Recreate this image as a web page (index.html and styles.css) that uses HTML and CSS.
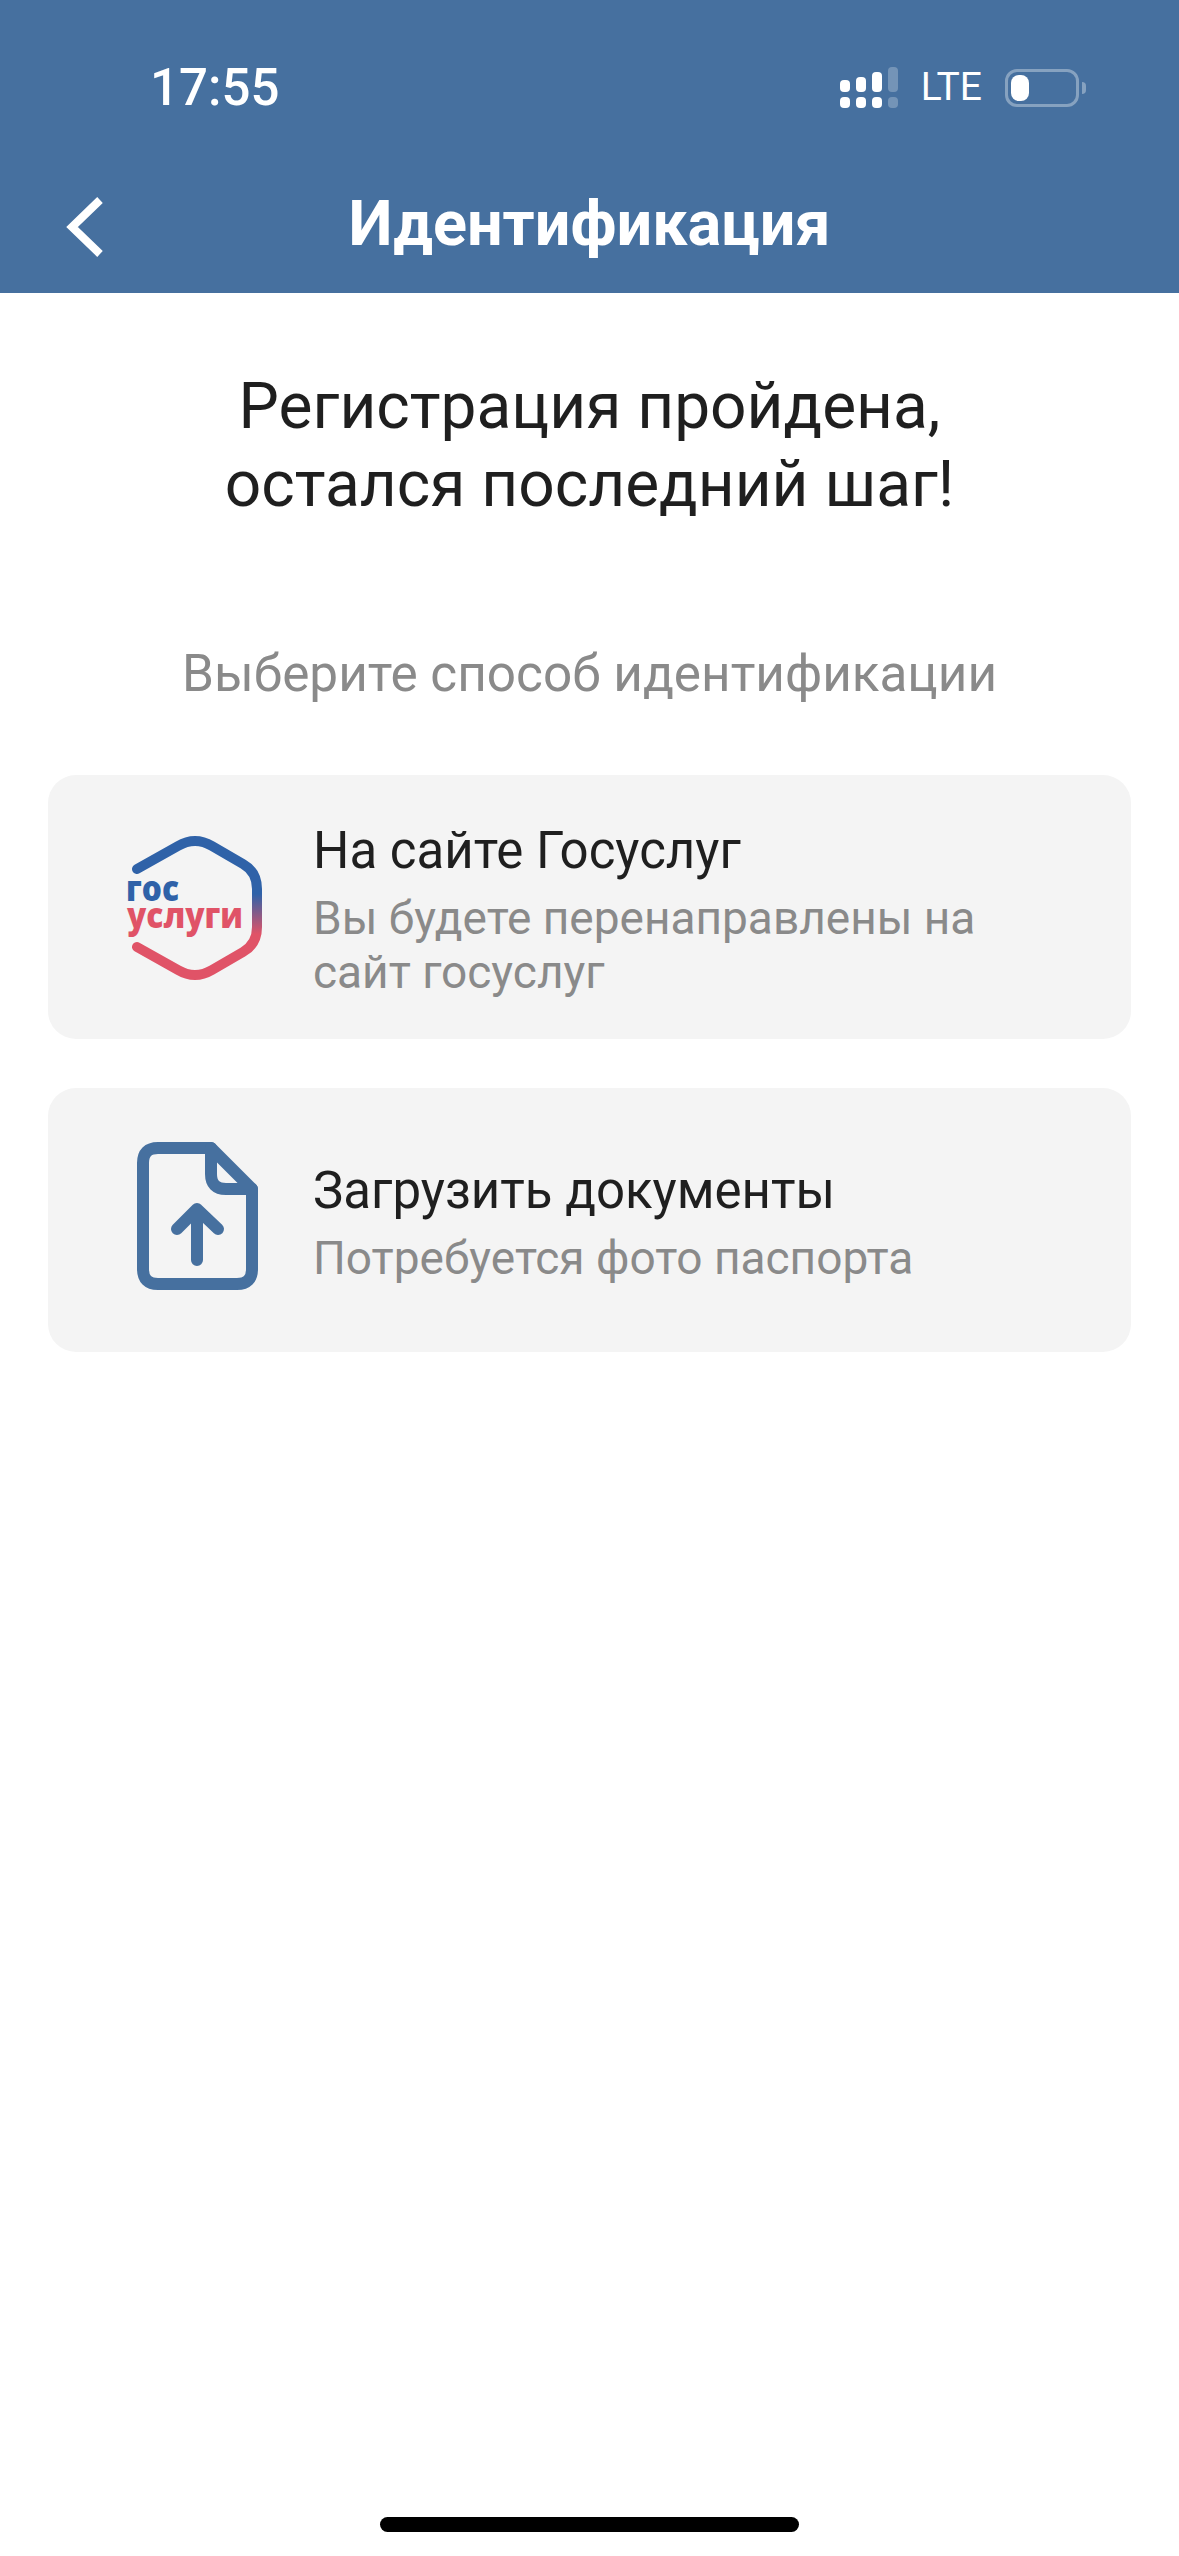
FILE: index.html
```html
<!DOCTYPE html>
<html lang="ru">
<head>
  <meta charset="UTF-8">
  <title>Идентификация</title>
  <link rel="stylesheet" href="styles.css">
</head>
<body>

<div class="page">
  <div class="top-bar">
    <div class="status-bar">
      <div class="status-time">17:55</div>
      <div class="status-right">
        <svg class="signal" width="58" height="41" viewBox="0 0 58 41">
          <g fill="#fff">
            <rect x="0" y="13" width="10" height="12" rx="4"/>
            <rect x="16" y="10" width="10" height="15" rx="4"/>
            <rect x="32" y="5" width="10" height="20" rx="4"/>
            <rect x="0" y="30" width="10" height="11" rx="4"/>
            <rect x="16" y="30" width="10" height="11" rx="4"/>
            <rect x="32" y="30" width="10" height="11" rx="4"/>
          </g>
          <g fill="#fff" opacity="0.25">
            <rect x="48" y="0" width="10" height="25" rx="4"/>
            <rect x="48" y="30" width="10" height="11" rx="4"/>
          </g>
        </svg>
        <div class="status-net">LTE</div>
        <div class="battery">
          <div class="battery-body"><div class="battery-fill"></div></div>
          <div class="battery-tip"></div>
        </div>
      </div>
    </div>
    <div class="nav-bar">
      <svg class="back-icon" width="40" height="60" viewBox="0 0 40 60">
        <path d="M35 3 L7 30 L35 57" fill="none" stroke="#fff" stroke-width="8"/>
      </svg>
      <div class="nav-title">Идентификация</div>
    </div>
  </div>

  <div class="content">
    <h1 class="main-title">Регистрация пройдена,<br>остался последний шаг!</h1>
    <div class="sub-title">Выберите способ идентификации</div>

    <div class="option-list">
      <div class="option-card">
        <div class="option-icon">
          <svg width="150" height="160" viewBox="120 828 150 160">
            <defs>
              <linearGradient id="hexGrad" gradientUnits="userSpaceOnUse" x1="0" y1="895" x2="0" y2="935">
                <stop offset="0" stop-color="#2f62a8"/>
                <stop offset="1" stop-color="#e05367"/>
              </linearGradient>
            </defs>
            <path d="M137 870 L178 847 Q195 837 212 847 L243 865 Q257 873 257 890 L257 928 Q257 945 243 953 L212 971 Q195 981 178 971 L137 948" fill="none" stroke="url(#hexGrad)" stroke-width="10" stroke-linecap="round"/>
            <text class="logo-top" x="126" y="902" textLength="53" lengthAdjust="spacingAndGlyphs">гос</text>
            <text class="logo-bottom" x="127" y="929" textLength="116" lengthAdjust="spacingAndGlyphs">услуги</text>
          </svg>
        </div>
        <div class="option-text">
          <div class="option-title">На сайте Госуслуг</div>
          <div class="option-desc">Вы будете перенаправлены на сайт госуслуг</div>
        </div>
      </div>

      <div class="option-card">
        <div class="option-icon">
          <svg width="150" height="160" viewBox="120 1140 150 160">
            <g fill="none" stroke="#46709f" stroke-width="12" stroke-linecap="round" stroke-linejoin="round">
              <path d="M211 1148 H158 Q143 1148 143 1163 V1269 Q143 1284 158 1284 H237 Q252 1284 252 1269 V1189 Z"/>
              <path d="M211 1148 V1174 Q211 1189 226 1189 H252"/>
              <path d="M197 1260 V1209 M177 1229 L197 1209 L218 1229"/>
            </g>
          </svg>
        </div>
        <div class="option-text">
          <div class="option-title">Загрузить документы</div>
          <div class="option-desc">Потребуется фото паспорта</div>
        </div>
      </div>
    </div>
  </div>

  <div class="home-indicator"></div>
</div>

</body>
</html>
```

FILE: styles.css
```css
* { margin: 0; padding: 0; box-sizing: border-box; }
body {
  font-family: Roboto, 'Liberation Sans', sans-serif;
  background-color: #fff;
  color: #1f1f1f;
}
.page {
  display: flex;
  flex-direction: column;
  height: 100vh;
  overflow: hidden;
}
.top-bar {
  height: 293px;
  background-color: #46709f;
  color: #fff;
  display: flex;
  flex-direction: column;
}
.status-bar {
  height: 178px;
  padding: 59px 93px 0 150px;
  display: flex;
  justify-content: space-between;
  align-items: flex-start;
}
.status-time {
  font-size: 51px;
  line-height: 58px;
  font-weight: 500;
}
.status-right {
  display: flex;
  align-items: center;
  padding-top: 8px;
}
.signal {
  display: block;
  margin-right: 23px;
}
.status-net {
  font-size: 39px;
  line-height: 41px;
  margin-right: 23px;
}
.battery {
  display: flex;
  align-items: center;
}
.battery-body {
  width: 74px;
  height: 38px;
  border: 3px solid rgba(255, 255, 255, .35);
  border-radius: 12px;
  padding: 3px;
}
.battery-fill {
  width: 18px;
  height: 100%;
  background-color: #fff;
  border-radius: 8px;
}
.battery-tip {
  width: 4px;
  height: 12px;
  margin-left: 3px;
  background-color: rgba(255, 255, 255, .35);
  border-radius: 0 4px 4px 0;
}
.nav-bar {
  flex: 1;
  position: relative;
  display: flex;
  justify-content: center;
  align-items: flex-start;
}
.back-icon {
  position: absolute;
  left: 65px;
  top: 19px;
}
.nav-title {
  font-size: 63px;
  line-height: 64px;
  font-weight: 700;
  margin-top: 14px;
}
.content {
  padding: 75px 48px 0;
}
.main-title {
  font-size: 64px;
  line-height: 78px;
  font-weight: 400;
  text-align: center;
}
.sub-title {
  margin-top: 120px;
  font-size: 51.3px;
  line-height: 60px;
  color: #8a8a8a;
  text-align: center;
}
.option-list {
  margin-top: 71px;
  display: flex;
  flex-direction: column;
  gap: 49px;
}
.option-card {
  height: 264px;
  background-color: #f4f4f4;
  border-radius: 28px;
  display: flex;
  align-items: center;
}
.option-icon {
  width: 265px;
  padding-left: 72px;
  flex-shrink: 0;
}
.option-icon svg {
  display: block;
}
.option-text {
  flex: 1;
  padding: 5px 60px 0 0;
}
.option-title {
  font-size: 51px;
  line-height: 60px;
}
.option-desc {
  margin-top: 10px;
  font-size: 46px;
  line-height: 54px;
  color: #8a8a8a;
}
.logo-top, .logo-bottom {
  font-family: 'Open Sans', Roboto, sans-serif;
  font-weight: 800;
  font-size: 36px;
}
.logo-top { fill: #2f62a8; }
.logo-bottom { fill: #e05367; }
.home-indicator {
  width: 419px;
  height: 15px;
  margin: auto auto 24px;
  background-color: #000;
  border-radius: 8px;
}
```
